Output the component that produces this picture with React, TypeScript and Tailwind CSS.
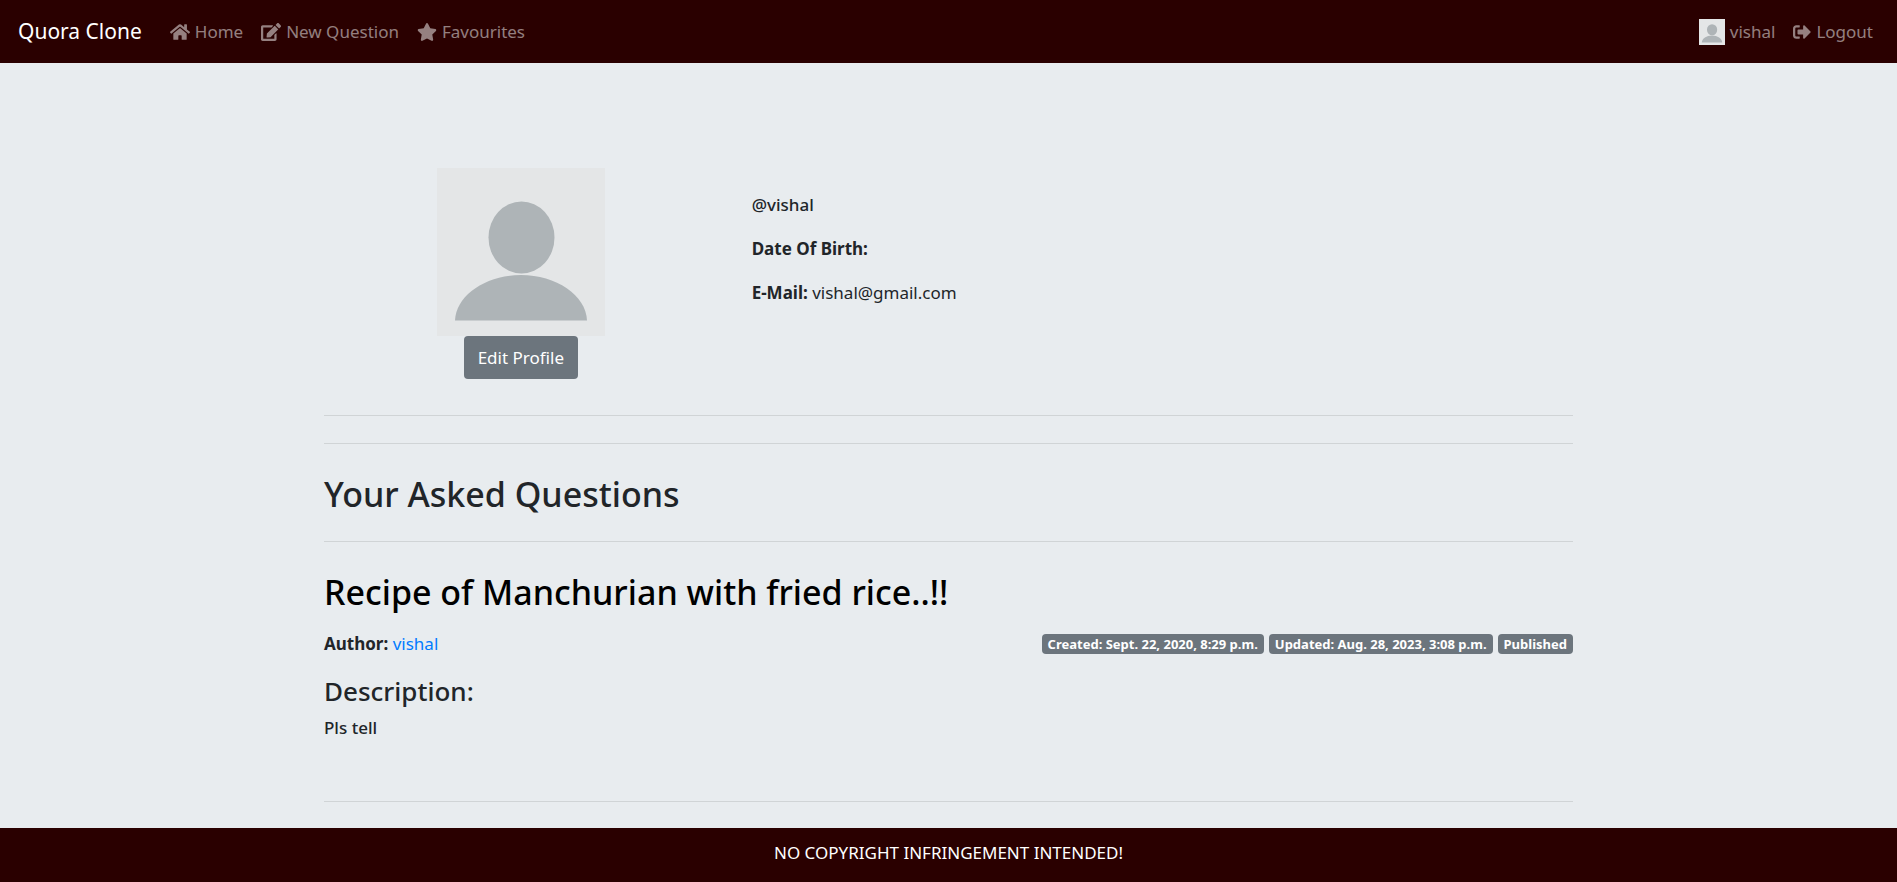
import type { ReactNode } from "react";
import { FaEdit, FaHome, FaSignOutAlt, FaStar } from "react-icons/fa";

function Avatar({ className, label }: { className: string; label: string }) {
  return (
    <svg viewBox="0 0 168 168" className={className} role="img" aria-label={label}>
      <rect width="168" height="168" fill="#e4e6e7" />
      <ellipse cx="84.5" cy="69.5" rx="33" ry="36" fill="#aeb4b7" />
      <path d="M18 152.500C19 127 49 107 84 107S149 127 150 152.500Z" fill="#aeb4b7" />
    </svg>
  );
}

function NavLink({ icon, children }: { icon: ReactNode; children: ReactNode }) {
  return (
    <a href="#" className="flex items-center gap-[5px] text-white/50 hover:text-white/75">
      {icon}
      {children}
    </a>
  );
}

function Badge({ children }: { children: ReactNode }) {
  return (
    <span className="rounded bg-[#6c757d] px-1.5 py-1 text-[13px] leading-3 font-bold whitespace-nowrap text-white">
      {children}
    </span>
  );
}

export default function App() {
  return (
    <div className="flex min-h-screen flex-col bg-[#e8ecef] font-['Noto_Sans','Open_Sans',sans-serif] text-[17px] leading-[26px] text-[#212529]">
      <header className="flex flex-wrap items-center justify-between bg-[#2a0000] py-[9px] pr-6 pl-[18px]">
        <nav className="flex flex-wrap items-center gap-[18px] leading-[45px]">
          <a href="#" className="mr-2.5 text-[21px] text-white">
            Quora Clone
          </a>
          <NavLink icon={<FaHome className="size-5" />}>Home</NavLink>
          <NavLink icon={<FaEdit className="size-5" />}>New Question</NavLink>
          <NavLink icon={<FaStar className="size-5" />}>Favourites</NavLink>
        </nav>
        <nav className="flex items-center gap-[18px] leading-[45px]">
          <NavLink icon={<Avatar className="size-[26px]" label="Profile picture" />}>vishal</NavLink>
          <NavLink icon={<FaSignOutAlt className="size-[18px]" />}>Logout</NavLink>
        </nav>
      </header>

      <main className="mx-auto w-full max-w-[1249px] flex-1 pt-[105px]">
        <section className="grid grid-cols-3 gap-[34px]">
          <div className="flex flex-col items-center">
            <Avatar className="size-[168px]" label="vishal" />
            <button type="button" className="rounded bg-[#6c757d] px-[14px] py-2 leading-[27px] text-white">
              Edit Profile
            </button>
          </div>
          <div className="col-span-2 flex flex-col gap-[18px] pt-6">
            <h5 className="font-medium">@vishal</h5>
            <p>
              <strong>Date Of Birth:</strong>
            </p>
            <p>
              <strong>E-Mail:</strong> vishal@gmail.com
            </p>
          </div>
        </section>

        <hr className="mt-9 border-black/10" />
        <hr className="mt-[27px] border-black/10" />
        <h2 className="mt-[29px] text-[34px] leading-[42px] font-medium">Your Asked Questions</h2>
        <hr className="mt-[26px] border-black/10" />

        <article className="mt-[29px]">
          <h2 className="text-[34px] leading-[42px] font-medium text-black">
            <a href="#">Recipe of Manchurian with fried rice..!!</a>
          </h2>
          <div className="mt-[18px] flex flex-wrap items-center justify-between">
            <p>
              <strong>Author:</strong>{" "}
              <a href="#" className="text-[#007bff]">
                vishal
              </a>
            </p>
            <div className="flex flex-wrap gap-[5px]">
              <Badge>Created: Sept. 22, 2020, 8:29 p.m.</Badge>
              <Badge>Updated: Aug. 28, 2023, 3:08 p.m.</Badge>
              <Badge>Published</Badge>
            </div>
          </div>
          <h4 className="mt-[18px] text-[26px] leading-8 font-medium">Description:</h4>
          <p className="mt-2 font-medium">Pls tell</p>
        </article>
        <hr className="mt-[60px] mb-[26px] border-black/10" />
      </main>

      <footer className="bg-[#2a0000] pt-3 pb-4 text-center text-white">NO COPYRIGHT INFRINGEMENT INTENDED!</footer>
    </div>
  );
}
